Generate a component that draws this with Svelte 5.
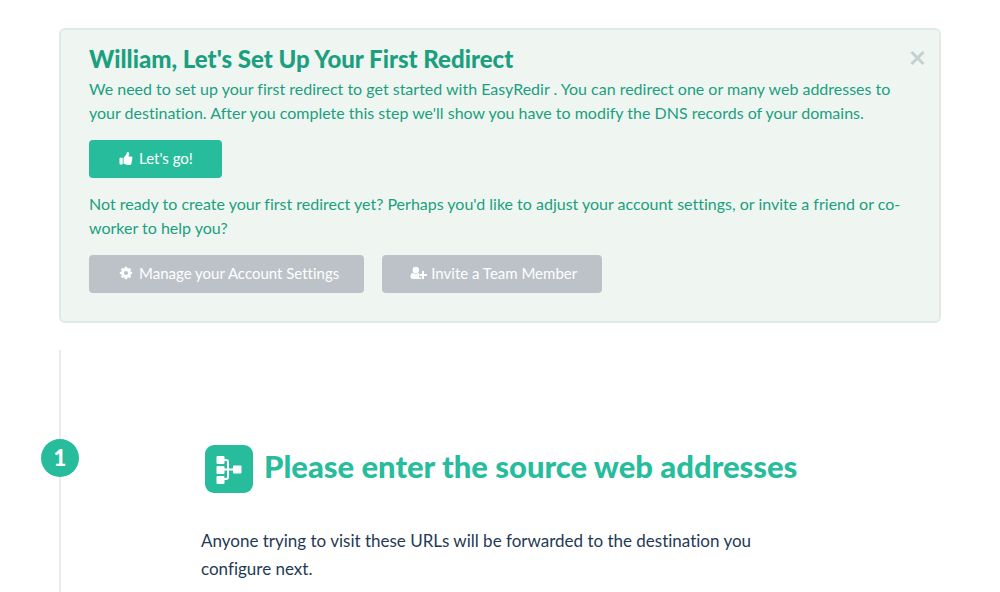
<script>
  let noticeOpen = $state(true);
  const teeth = [0, 45, 90, 135, 180, 225, 270, 315];
</script>

<main>
  {#if noticeOpen}
    <section class="notice">
      <div class="notice-body">
        <h1>William, Let's Set Up Your First Redirect</h1>
        <p>
          We need to set up your first redirect to get started with EasyRedir . You can redirect one or many web addresses to
          your destination. After you complete this step we'll show you have to modify the DNS records of your domains.
        </p>
        <div class="actions">
          <button class="btn primary" type="button">
            <svg width="14" height="13" viewBox="0 0 512 512" aria-hidden="true">
              <path fill="currentColor" d="M104 224H24c-13.255 0-24 10.745-24 24v216c0 13.255 10.745 24 24 24h80c13.255 0 24-10.745 24-24V248c0-13.255-10.745-24-24-24zM384 81.452c0 42.416-25.97 66.208-33.277 94.548h101.723c33.397 0 59.397 27.746 59.553 58.098.084 17.938-7.546 37.249-19.439 49.197l-.11.11c9.836 23.337 8.237 56.037-9.308 79.469 8.681 25.895-.069 57.704-16.382 74.757 4.298 17.598 2.244 32.575-6.148 44.632C440.202 511.587 389.616 512 346.839 512l-2.845-.001c-48.287-.017-87.806-17.598-119.56-31.725-15.957-7.099-36.821-15.887-52.651-16.178-6.54-.12-11.783-5.457-11.783-11.998v-213.77c0-3.2 1.282-6.271 3.558-8.521 39.614-39.144 56.648-80.587 89.117-113.111 14.804-14.832 20.188-37.236 25.393-58.902C282.515 39.293 291.817 0 312 0c24 0 72 8 72 81.452z" />
            </svg>
            <span>Let's go!</span>
          </button>
        </div>
        <p>
          Not ready to create your first redirect yet? Perhaps you'd like to adjust your account settings, or invite a friend or co-worker to help you?
        </p>
        <div class="actions">
          <button class="btn muted" type="button">
            <svg width="14" height="14" viewBox="0 0 14 14" aria-hidden="true">
              <circle cx="7" cy="7" r="3.4" fill="none" stroke="currentColor" stroke-width="2.6" />
              {#each teeth as angle}
                <path fill="currentColor" d="M5.400 3L5.900.8h2.200L8.600 3z" transform="rotate({angle} 7 7)" />
              {/each}
            </svg>
            <span>Manage your Account Settings</span>
          </button>
          <button class="btn muted tight" type="button">
            <svg width="17" height="14" viewBox="0 0 17 14" aria-hidden="true">
              <circle cx="5.800" cy="4" r="3.200" fill="currentColor" />
              <path fill="currentColor" d="M3 6.700C1.100 7 .5 8.800.5 11c0 1.300.8 2 1.900 2h7.200c1 0 1.700-.5 1.800-1.500H9V7.700l.3-.8-.7-.2C7.400 8.100 4.300 8.100 3 6.700z" />
              <path fill="currentColor" d="M12 5h2v3h3v2h-3v3h-2v-3H9.500V8H12z" />
            </svg>
            <span>Invite a Team Member</span>
          </button>
        </div>
      </div>
      <button class="close" type="button" aria-label="Close" onclick={() => (noticeOpen = false)}>
        <svg width="15" height="14" viewBox="0 0 15 14" aria-hidden="true">
          <path d="M1.500 1l12 12M13.500 1l-12 12" fill="none" stroke="currentColor" stroke-width="3" />
        </svg>
      </button>
    </section>
  {/if}

  <section class="step">
    <span class="number">1</span>
    <div class="step-body">
      <h2>
        <svg class="tile" width="50" height="50" viewBox="0 0 50 50" aria-hidden="true">
          <rect x="1" y="1" width="48" height="48" rx="9" fill="#27bc9c" />
          <path d="M17 16h5q2 0 2 2v15q0 2-2 2h-5M17 25.500h16" fill="none" stroke="#fff" stroke-width="2" />
          <g fill="#fff">
            <rect x="12.500" y="12" width="8" height="8" rx="1" />
            <rect x="12.500" y="22" width="8" height="8" rx="1" />
            <rect x="12.500" y="32" width="8" height="8" rx="1" />
            <rect x="29" y="21.500" width="8.500" height="8" rx="1" />
          </g>
        </svg>
        <span>Please enter the source web addresses</span>
      </h2>
      <p>Anyone trying to visit these URLs will be forwarded to the destination you configure next.</p>
    </div>
  </section>
</main>

<style>
  :global(body) {
    margin: 0;
    background: #fff;
  }
  main {
    padding: 28px 59px 0;
    font-family: "Avenir Next", Avenir, Lato, sans-serif;
    font-variant-ligatures: none;
  }
  h1, h2, p {
    margin: 0;
  }
  h1, h2 {
    font-family: "Avenir Next", Avenir, "Lato Black", Lato, sans-serif;
  }
  .notice {
    display: flex;
    justify-content: space-between;
    border: 2px solid #dfebe8;
    border-radius: 6px;
    background: #eff6f2;
    color: #1b9f7f;
    padding: 14px 12px 28px 28px;
  }
  .notice-body {
    max-width: 812px;
  }
  h1 {
    padding-bottom: 3px;
    font-size: 24px;
    line-height: 30px;
    font-weight: 900;
  }
  .notice p {
    font-size: 16px;
    line-height: 24px;
  }
  .actions {
    display: flex;
    flex-wrap: wrap;
    gap: 18px;
    padding: 15px 0 14px;
  }
  .actions:last-child {
    padding-bottom: 0;
  }
  .btn {
    display: flex;
    align-items: center;
    gap: 6px;
    height: 38px;
    padding: 0 29px 2px 30px;
    border: 0;
    border-radius: 4px;
    color: #fff;
    font-family: inherit;
    font-size: 15px;
    font-variant-ligatures: inherit;
    cursor: pointer;
  }
  .primary {
    background: #27bc9c;
  }
  .muted {
    padding-right: 25px;
    background: #bcc2c8;
  }
  .tight {
    gap: 4px;
    padding-left: 28px;
  }
  .close {
    align-self: flex-start;
    display: flex;
    margin-top: 5px;
    padding: 2px;
    border: 0;
    background: none;
    color: #c5d0d0;
    cursor: pointer;
  }
  .step {
    display: flex;
    align-items: flex-start;
    margin-top: 27px;
    padding-top: 89px;
    border-left: 2px solid #ebebeb;
  }
  .number {
    flex: none;
    width: 38px;
    margin-left: -20px;
    border-radius: 50%;
    background: #27bc9c;
    color: #fff;
    font-size: 22px;
    line-height: 38px;
    font-weight: 900;
    text-align: center;
  }
  .step-body {
    margin: 5px 0 0 122px;
    padding-bottom: 9px;
  }
  h2 {
    display: flex;
    align-items: center;
    gap: 10px;
    margin-left: 3px;
    color: #27bc9c;
    font-size: 31px;
    line-height: 40px;
    font-weight: 900;
  }
  h2 span {
    padding-bottom: 6px;
  }
  .tile {
    flex: none;
  }
  .step-body p {
    max-width: 590px;
    margin-top: 33px;
    color: #1f3a55;
    font-size: 17px;
    line-height: 28px;
  }
</style>
